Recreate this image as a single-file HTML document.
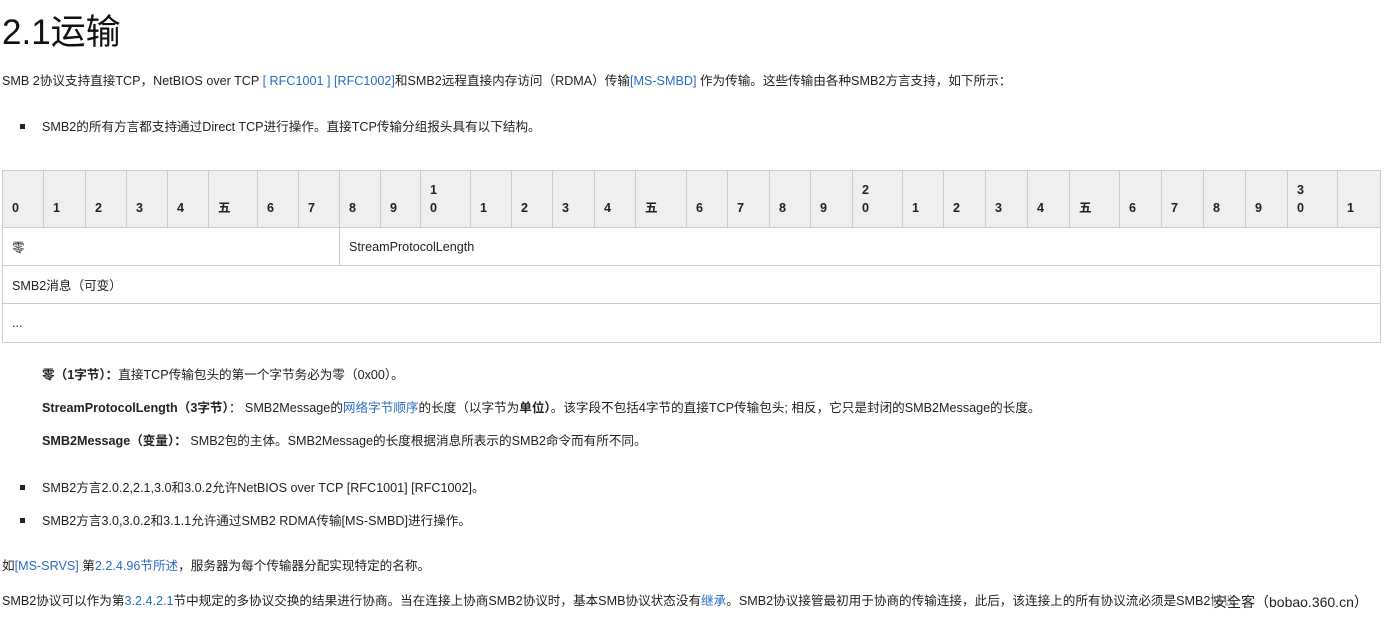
<!DOCTYPE html>
<html><head><meta charset="utf-8"><style>
body{margin:0;width:1384px;height:620px;overflow:hidden;background:#fff;font-family:"Liberation Sans","Noto Sans CJK SC",sans-serif;font-size:12.6px;color:#222;position:relative}
.a{position:absolute;white-space:nowrap}
a{color:#2a6cc4;text-decoration:none}
h1{position:absolute;left:2px;top:4px;margin:0;font-weight:normal;font-size:35px;color:#111}
.sq{position:absolute;width:5px;height:5px;background:#222}
table{position:absolute;left:2px;top:170px;border-collapse:collapse;table-layout:fixed;width:1379px}
td{border:1px solid #ccc;padding:0 0 0 9px;font-size:12.6px;vertical-align:middle}
tr.h td{background:#efefef;height:46px;vertical-align:bottom;padding-bottom:10px;font-weight:bold;line-height:18px}
tr.r td{height:37px}
tr.r.l td{height:38px}
b{font-weight:bold}
</style></head><body>
<h1>2.1运输</h1>
<div class="a" style="left:2px;top:70px">SMB 2协议支持直接TCP，NetBIOS over TCP <a>[ RFC1001 ]</a> <a>[RFC1002]</a>和SMB2远程直接内存访问（RDMA）传输<a>[MS-SMBD]</a> 作为传输。这些传输由各种SMB2方言支持，如下所示：</div>
<div class="sq" style="left:20px;top:124px"></div>
<div class="a" style="left:42px;top:116px">SMB2的所有方言都支持通过Direct TCP进行操作。直接TCP传输分组报头具有以下结构。</div>
<table>
<colgroup><col style="width:41px"><col style="width:42px"><col style="width:41px"><col style="width:41px"><col style="width:41px"><col style="width:49px"><col style="width:41px"><col style="width:41px"><col style="width:41px"><col style="width:40px"><col style="width:50px"><col style="width:41px"><col style="width:41px"><col style="width:42px"><col style="width:41px"><col style="width:51px"><col style="width:41px"><col style="width:42px"><col style="width:41px"><col style="width:42px"><col style="width:50px"><col style="width:41px"><col style="width:42px"><col style="width:42px"><col style="width:42px"><col style="width:50px"><col style="width:42px"><col style="width:42px"><col style="width:42px"><col style="width:42px"><col style="width:50px"><col style="width:43px"></colgroup>
<tr class="h"><td>0</td><td>1</td><td>2</td><td>3</td><td>4</td><td>五</td><td>6</td><td>7</td><td>8</td><td>9</td><td>1<br>0</td><td>1</td><td>2</td><td>3</td><td>4</td><td>五</td><td>6</td><td>7</td><td>8</td><td>9</td><td>2<br>0</td><td>1</td><td>2</td><td>3</td><td>4</td><td>五</td><td>6</td><td>7</td><td>8</td><td>9</td><td>3<br>0</td><td>1</td></tr>
<tr class="r"><td colspan="8">零</td><td colspan="24">StreamProtocolLength</td></tr>
<tr class="r"><td colspan="32">SMB2消息（可变）</td></tr>
<tr class="r l"><td colspan="32">...</td></tr>
</table>
<div class="a" style="left:42px;top:364px"><b>零（1字节）：</b>直接TCP传输包头的第一个字节务必为零（0x00）。</div>
<div class="a" style="left:42px;top:397px"><b>StreamProtocolLength（3字节）</b>： SMB2Message的<a>网络字节顺序</a>的长度（以字节为<b>单位）</b>。该字段不包括4字节的直接TCP传输包头; 相反，它只是封闭的SMB2Message的长度。</div>
<div class="a" style="left:42px;top:430px"><b>SMB2Message（变量）：</b> SMB2包的主体。SMB2Message的长度根据消息所表示的SMB2命令而有所不同。</div>
<div class="sq" style="left:20px;top:485px"></div>
<div class="a" style="left:42px;top:477px">SMB2方言2.0.2,2.1,3.0和3.0.2允许NetBIOS over TCP [RFC1001] [RFC1002]。</div>
<div class="sq" style="left:20px;top:518px"></div>
<div class="a" style="left:42px;top:510px">SMB2方言3.0,3.0.2和3.1.1允许通过SMB2 RDMA传输[MS-SMBD]进行操作。</div>
<div class="a" style="left:2px;top:555px">如<a>[MS-SRVS]</a> 第<a>2.2.4.96节所述</a>，服务器为每个传输器分配实现特定的名称。</div>
<div class="a" style="left:2px;top:590px">SMB2协议可以作为第<a>3.2.4.2.1</a>节中规定的多协议交换的结果进行协商。当在连接上协商SMB2协议时，基本SMB协议状态没有<a>继承</a>。SMB2协议接管最初用于协商的传输连接，此后，该连接上的所有协议流必须是SMB2协议</div>
<div class="a" style="left:1213px;top:592px;font-size:14px;color:#222;background:rgba(255,255,255,0.5)">安全客（bobao.360.cn）</div>
</body></html>
